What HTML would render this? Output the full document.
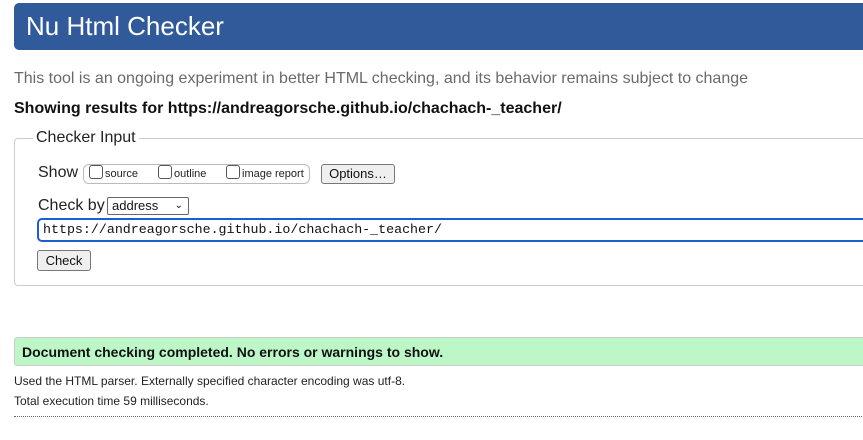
<!DOCTYPE html>
<html><head><style>
body{margin:0;width:863px;height:440px;overflow:hidden;background:#fff;font-family:"Liberation Sans",Arial,sans-serif;position:relative}
.a{position:absolute;white-space:nowrap}
</style></head><body>
<div class="a" style="left:14px;top:3px;width:870px;height:47px;background:#315a9a;border-radius:5px"></div>
<div class="a" style="left:26px;top:10px;font-size:26px;color:#fff;line-height:32px">Nu Html Checker</div>
<div class="a" style="left:14px;top:70px;font-size:16px;color:#6a6a6a">This tool is an ongoing experiment in better HTML checking, and its behavior remains subject to change</div>
<div class="a" style="left:14px;top:100px;font-size:16px;font-weight:bold;color:#111">Showing results for https://andreagorsche.github.io/chachach-_teacher/</div>
<div class="a" style="left:14px;top:138px;width:870px;height:148px;border:1px solid #ccc;border-radius:4px;box-sizing:border-box"></div>
<div class="a" style="left:33px;top:129px;padding:0 3px;background:#fff;font-size:16px;color:#222">Checker Input</div>
<div class="a" style="left:38px;top:164px;font-size:16px;color:#222">Show</div>
<div class="a" style="left:83px;top:164px;width:227px;height:20px;border:1px solid #bbb;border-radius:6px;box-sizing:border-box"></div>
<div class="a" style="left:89px;top:165px;width:12px;height:12px;border:1px solid #555;border-radius:3px"></div>
<div class="a" style="left:105px;top:168px;font-size:11px;color:#222">source</div>
<div class="a" style="left:158px;top:165px;width:12px;height:12px;border:1px solid #555;border-radius:3px"></div>
<div class="a" style="left:174px;top:168px;font-size:11px;color:#222">outline</div>
<div class="a" style="left:226px;top:165px;width:12px;height:12px;border:1px solid #555;border-radius:3px"></div>
<div class="a" style="left:242px;top:168px;font-size:11px;color:#222">image report</div>
<div class="a" style="left:321px;top:164px;width:74px;height:20px;border:1px solid #777;border-radius:3px;background:#efefef;box-sizing:border-box;font-size:13px;text-align:center;line-height:18px;color:#111">Options…</div>
<div class="a" style="left:38px;top:197px;font-size:16px;color:#222">Check by</div>
<div class="a" style="left:107px;top:197px;width:82px;height:18px;border:1px solid #666;border-radius:2px;box-sizing:border-box;font-size:13px;line-height:16px;padding-left:4px;color:#111">address<span style="position:absolute;right:5px;top:0;font-size:10px">&#8964;</span></div>
<div class="a" style="left:37px;top:218px;width:840px;height:24px;border:2px solid #1a5fd0;border-radius:5px;box-sizing:border-box"></div>
<div class="a" style="left:43px;top:222px;font-family:'Liberation Mono',monospace;font-size:13.3px;color:#111">https://andreagorsche.github.io/chachach-_teacher/</div>
<div class="a" style="left:37px;top:250px;width:54px;height:21px;border:1px solid #777;border-radius:3px;background:#efefef;box-sizing:border-box;font-size:13px;text-align:center;line-height:19px;color:#111">Check</div>
<div class="a" style="left:14px;top:337px;width:870px;height:29px;background:#bdf7c8;border:1px solid #ccc;border-radius:3px;box-sizing:border-box"></div>
<div class="a" style="left:22px;top:344px;font-size:14px;font-weight:bold;color:#111">Document checking completed. No errors or warnings to show.</div>
<div class="a" style="left:14px;top:374px;font-size:12px;color:#222">Used the HTML parser. Externally specified character encoding was utf-8.</div>
<div class="a" style="left:14px;top:394px;font-size:12px;color:#222">Total execution time 59 milliseconds.</div>
<div class="a" style="left:14px;top:416px;width:860px;border-top:1px dotted #666"></div>
</body></html>
